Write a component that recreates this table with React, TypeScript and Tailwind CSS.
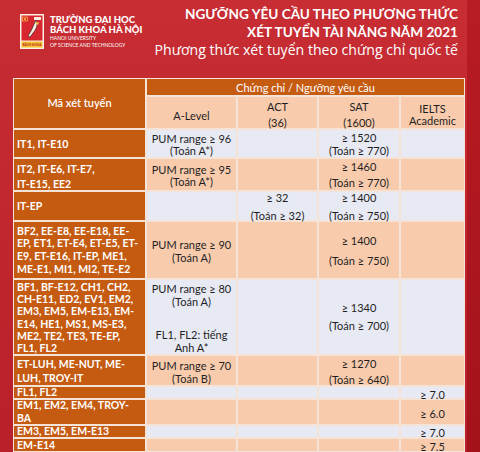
import React from 'react';

const ORANGE = 'bg-[#c55a11]';
const PEACH = 'bg-[#f8cbad]';
const BLUE = 'bg-[#e7e9f3]';

function Logo() {
  return (
    <svg width="24" height="35" viewBox="0 0 24 35" className="shrink-0">
      <rect x="0" y="0" width="24" height="35" fill="#fbeee3" />
      <rect x="1.5" y="1.5" width="21" height="25" fill="#d7262f" />
      <rect x="2.5" y="3" width="5" height="4" fill="#e52d2d" stroke="#f5d34a" strokeWidth="0.6" />
      <circle cx="5" cy="5" r="0.9" fill="#f5d34a" />
      <rect x="14" y="3" width="7" height="3" fill="#fbeee3" />
      <path d="M16 6 C 18 10, 17 14, 13 19 L 10 23 L 8 22 L 11 17 C 13 13, 14 10, 16 6 Z" fill="#fbeee3" stroke="#222" strokeWidth="0.6" />
      <path d="M15 9 L 19 8 L 18 11 Z" fill="#f5d34a" />
      <rect x="1.5" y="27.5" width="21" height="6" fill="#f2c431" />
      <text x="12" y="32" textAnchor="middle" fontSize="3.2" fontWeight="700" fill="#c3232b" fontFamily="Lato, sans-serif">BÁCH KHOA</text>
    </svg>
  );
}

function Cell({ bg, className = '', children }: { bg: string; className?: string; children?: React.ReactNode }) {
  return <div className={`${bg} ${className}`}>{children}</div>;
}

function Code({ lead = 'leading-[12px]', className = '', children }: { lead?: string; className?: string; children: React.ReactNode }) {
  return (
    <Cell bg={ORANGE} className={`flex items-center pl-[3px] font-bold text-white text-[10.5px] whitespace-nowrap ${lead} ${className}`}>
      <div>{children}</div>
    </Cell>
  );
}

function Val({ bg, lead = 'leading-[13px]', justify = 'justify-center', className = '', children }: {
  bg: string; lead?: string; justify?: string; className?: string; children?: React.ReactNode;
}) {
  return (
    <Cell bg={bg} className={`flex flex-col items-center ${justify} text-center text-[11px] text-[#1f1f1f] whitespace-nowrap ${lead} ${className}`}>
      {children}
    </Cell>
  );
}

export default function App() {
  return (
    <div className="flex w-[480px] h-[452px] overflow-hidden bg-gradient-to-b from-[#c72d33] to-[#b8202a] font-['Lato',sans-serif]">
      <div className="w-[467px] flex flex-col">
        <header className="h-[79px] flex items-start">
          <div className="flex gap-[6px] pl-[20px] pt-[14px]">
            <Logo />
            <div className="text-white pt-[1px]">
              <div className="text-[9.5px] font-black leading-[10px]">TRƯỜNG ĐẠI HỌC</div>
              <div className="text-[9.5px] font-black leading-[10px]">BÁCH KHOA HÀ NỘI</div>
              <div className="text-[5px] leading-[7px]">HANOI UNIVERSITY</div>
              <div className="text-[5px] leading-[6px]">OF SCIENCE AND TECHNOLOGY</div>
            </div>
          </div>
          <div className="flex-1 text-right text-white pr-[9px] pt-[5px]">
            <div className="text-[13.6px] font-bold leading-[18px]">NGƯỠNG YÊU CẦU THEO PHƯƠNG THỨC</div>
            <div className="text-[13.6px] font-bold leading-[18px]">XÉT TUYỂN TÀI NĂNG NĂM 2021</div>
            <div className="text-[14.1px] leading-[18px] font-['Open_Sans',sans-serif]">Phương thức xét tuyển theo chứng chỉ quốc tế</div>
          </div>
        </header>

        <div className="ml-[13px] w-[452px] bg-[#f6e3d8] p-[1px] grid gap-[2px] grid-cols-[131px_89px_79px_80px_63px] grid-rows-[16px_31px_27px_31px_28px_56px_74px_29px_11px_24px_11px_12px]">
          <Cell bg={ORANGE} className="row-span-2 flex items-center justify-center text-white text-[11px] font-semibold">
            Mã xét tuyển
          </Cell>
          <Cell bg={ORANGE} className="col-span-4 flex items-center justify-center text-white text-[11px] pt-[2px]">
            Chứng chỉ / Ngưỡng yêu cầu
          </Cell>
          <Val bg={PEACH} className="pt-[6px]">A-Level</Val>
          <Val bg={PEACH} lead="leading-[16px]" justify="justify-start" className="pt-[2px]"><span>ACT</span><span>(36)</span></Val>
          <Val bg={PEACH} lead="leading-[16px]" justify="justify-start" className="pt-[2px]"><span>SAT</span><span>(1600)</span></Val>
          <Val bg={PEACH} lead="leading-[12px]" className="pt-[4px]"><span>IELTS</span><span>Academic</span></Val>

          {/* IT1 */}
          <Code>IT1, IT-E10</Code>
          <Val bg={BLUE} lead="leading-[12px]" className="pt-[3px]"><span>PUM range ≥ 96</span><span>(Toán A*)</span></Val>
          <Val bg={BLUE} />
          <Val bg={BLUE}><span>≥ 1520</span><span>(Toán ≥ 770)</span></Val>
          <Val bg={BLUE} />

          {/* IT2 */}
          <Code lead="leading-[15px]" className="pt-[4px]">IT2, IT-E6, IT-E7,<br />IT-E15, EE2</Code>
          <Val bg={PEACH} lead="leading-[12px]" className="pt-[2px]"><span>PUM range ≥ 95</span><span>(Toán A*)</span></Val>
          <Val bg={PEACH} />
          <Val bg={PEACH} lead="leading-[16px]"><span>≥ 1460</span><span>(Toán ≥ 770)</span></Val>
          <Val bg={PEACH} />

          {/* IT-EP */}
          <Code>IT-EP</Code>
          <Val bg={BLUE} />
          <Val bg={BLUE} lead="leading-[18px]" className="pt-[1px]"><span>≥ 32</span><span>(Toán ≥ 32)</span></Val>
          <Val bg={BLUE} lead="leading-[18px]" className="pt-[1px]"><span>≥ 1400</span><span>(Toán ≥ 750)</span></Val>
          <Val bg={BLUE} />

          {/* BF2 */}
          <Code lead="leading-[12.6px]">BF2, EE-E8, EE-E18, EE-<br />EP, ET1, ET-E4, ET-E5, ET-<br />E9, ET-E16, IT-EP, ME1,<br />ME-E1, MI1, MI2, TE-E2</Code>
          <Val bg={PEACH} className="pt-[2px]"><span>PUM range ≥ 90</span><span>(Toán A)</span></Val>
          <Val bg={PEACH} />
          <Val bg={PEACH} lead="leading-[20px]" className="pt-[2px]"><span>≥ 1400</span><span>(Toán ≥ 750)</span></Val>
          <Val bg={PEACH} />

          {/* BF1 */}
          <Code lead="leading-[12.3px]" className="pt-[1px]">BF1, BF-E12, CH1, CH2,<br />CH-E11, ED2, EV1, EM2,<br />EM3, EM5, EM-E13, EM-<br />E14, HE1, MS1, MS-E3,<br />ME2, TE2, TE3, TE-EP,<br />FL1, FL2</Code>
          <Val bg={BLUE} justify="justify-between" className="pt-[2px]">
            <div className="flex flex-col"><span>PUM range ≥ 80</span><span>(Toán A)</span></div>
            <div className="flex flex-col"><span>FL1, FL2: tiếng</span><span>Anh A*</span></div>
          </Val>
          <Val bg={BLUE} />
          <Val bg={BLUE} lead="leading-[18px]"><span>≥ 1340</span><span>(Toán ≥ 700)</span></Val>
          <Val bg={BLUE} />

          {/* ET-LUH */}
          <Code lead="leading-[14px]">ET-LUH, ME-NUT, ME-<br />LUH, TROY-IT</Code>
          <Val bg={PEACH} className="pt-[3px]"><span>PUM range ≥ 70</span><span>(Toán B)</span></Val>
          <Val bg={PEACH} />
          <Val bg={PEACH} lead="leading-[16px]" className="pt-[2px]"><span>≥ 1270</span><span>(Toán ≥ 640)</span></Val>
          <Val bg={PEACH} />

          {/* FL1 */}
          <Code lead="leading-[11px]">FL1, FL2</Code>
          <Val bg={BLUE} />
          <Val bg={BLUE} />
          <Val bg={BLUE} />
          <Val bg={BLUE} lead="leading-[11px]" className="pt-[3px]">≥ 7.0</Val>

          {/* EM1 */}
          <Code lead="leading-[13px]">EM1, EM2, EM4, TROY-<br />BA</Code>
          <Val bg={PEACH} />
          <Val bg={PEACH} />
          <Val bg={PEACH} />
          <Val bg={PEACH} lead="leading-[11px]" className="pt-[2px]">≥ 6.0</Val>

          {/* EM3 */}
          <Code lead="leading-[11px]">EM3, EM5, EM-E13</Code>
          <Val bg={BLUE} />
          <Val bg={BLUE} />
          <Val bg={BLUE} />
          <Val bg={BLUE} lead="leading-[11px]" className="pt-[2px]">≥ 7.0</Val>

          {/* EM-E14 */}
          <Code lead="leading-[11px]">EM-E14</Code>
          <Val bg={PEACH} />
          <Val bg={PEACH} />
          <Val bg={PEACH} />
          <Val bg={PEACH} lead="leading-[11px]" className="pt-[2px]">≥ 7.5</Val>
        </div>
      </div>
      <div className="flex-1 bg-gradient-to-b from-[#b81c24] to-[#a3121a]" />
    </div>
  );
}
